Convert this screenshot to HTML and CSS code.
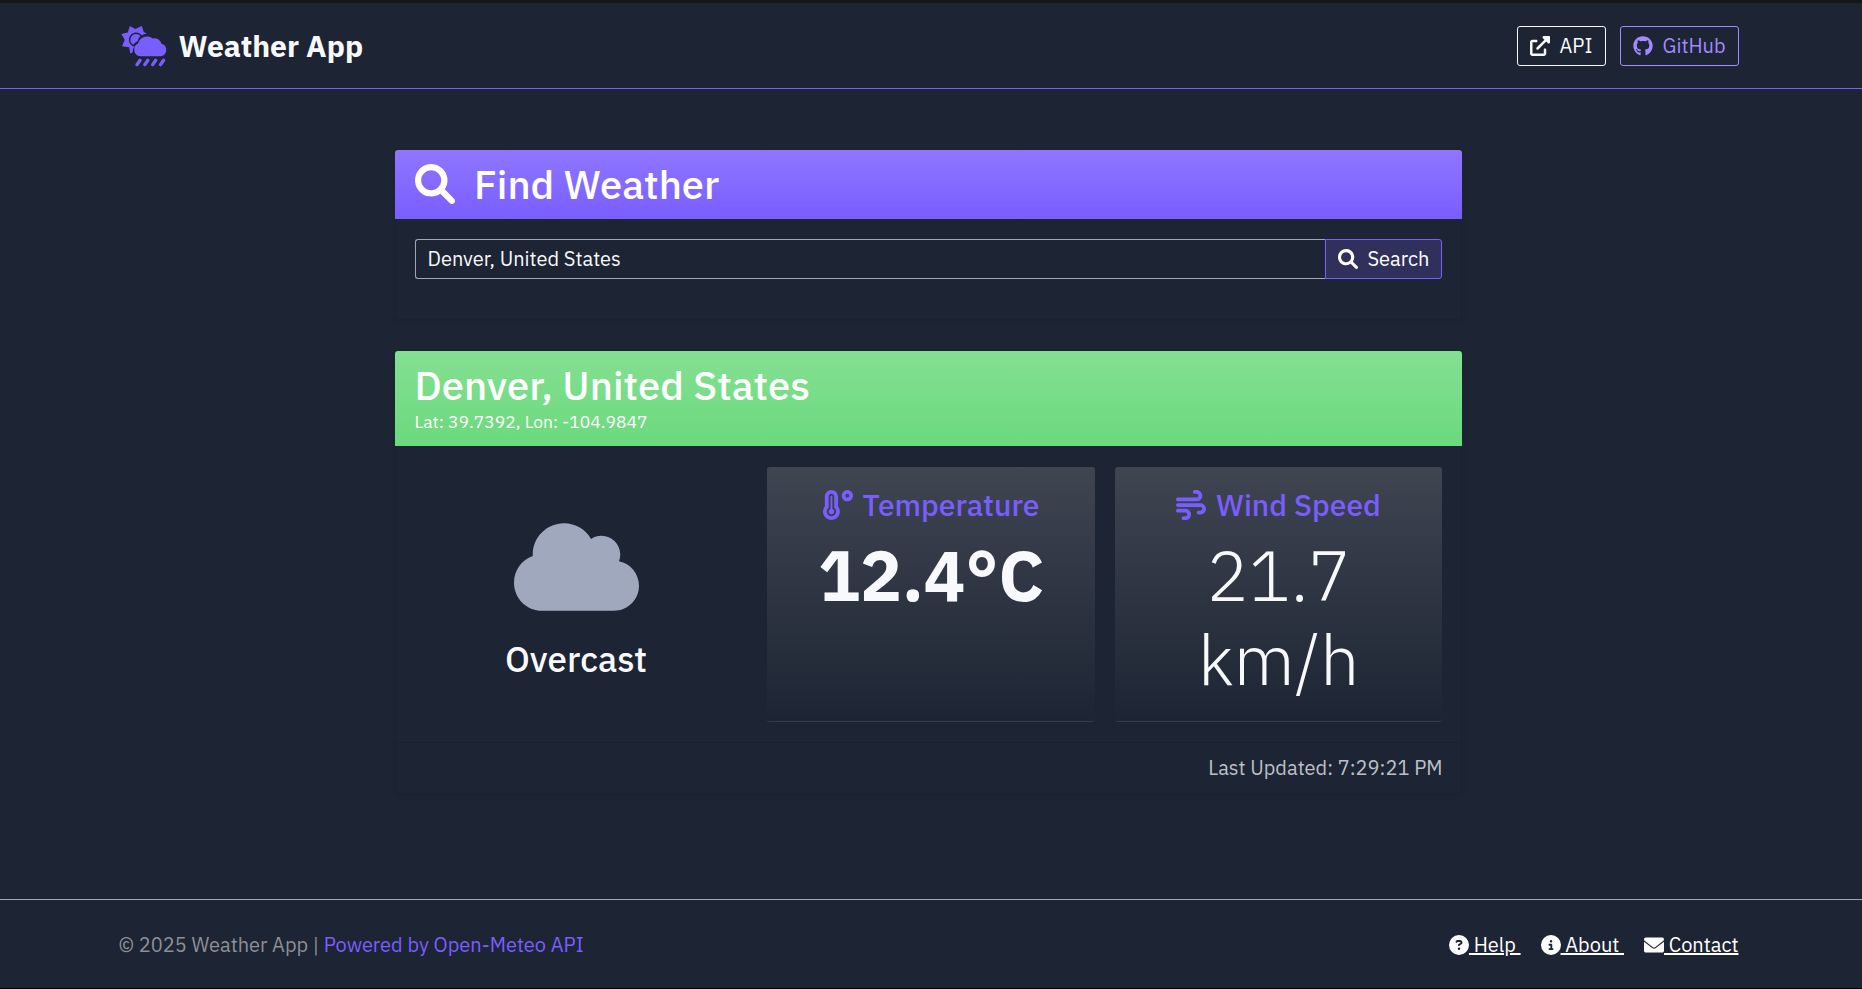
FILE: index.html
```html
<!DOCTYPE html>
<html lang="en">
<head>
<meta charset="utf-8">
<title>Weather App</title>
<link rel="stylesheet" href="styles.css">
</head>
<body>
<svg class="sprite" aria-hidden="true">
  <symbol id="search" viewBox="0 0 512 512"><path d="M500.3 443.7l-119.7-119.7c27.22-40.41 40.65-90.9 33.46-144.7C401.8 87.79 326.8 13.32 235.2 1.723C99.01-15.51-15.51 99.01 1.724 235.2c11.6 91.64 86.08 166.7 177.6 178.9c53.8 7.189 104.3-6.236 144.7-33.46l119.7 119.7c15.62 15.62 40.95 15.62 56.57 0C515.9 484.7 515.9 459.3 500.3 443.7zM79.1 208c0-70.58 57.42-128 128-128s128 57.42 128 128c0 70.58-57.42 128-128 128S79.1 278.6 79.1 208z"/></symbol>
</svg>
<header class="topbar">
  <div class="container bar">
    <a class="brand">
      <svg class="brand-icon" viewBox="0 0 138 122" preserveAspectRatio="none">
        <path d="M34 79L27 82L24 63L3 60L11 41L1 24L20 19L26 0L42 9L61 0L67 18L76 23Q66 24 61 28A21 21 0 1 0 39 61Q34 68 34 79Z"/>
        <path d="M36 56A17 17 0 1 1 57 30Q51 35 49 45Q42 49 36 56Z"/>
        <path d="M57 90A20 20 0 0 1 50 52A27 27 0 0 1 93 37A22 22 0 0 1 119 53A19 19 0 0 1 117 90Z"/>
        <path class="drops" d="M56 102L47 115M79 102L70 115M102 102L93 115M125 102L116 115"/>
      </svg>
      <span class="brand-name">Weather App</span>
    </a>
    <nav class="actions">
      <a class="btn btn-light"><svg class="icon" viewBox="0 0 512 512"><path d="M384 320c-17.67 0-32 14.33-32 32v96H64V160h96c17.67 0 32-14.32 32-32s-14.33-32-32-32L64 96c-35.35 0-64 28.65-64 64V448c0 35.34 28.65 64 64 64h288c35.35 0 64-28.66 64-64v-96C416 334.3 401.7 320 384 320zM488 0H352c-12.94 0-24.62 7.797-29.56 19.75c-4.969 11.97-2.219 25.72 6.938 34.88L370.8 96L169.4 297.4c-12.5 12.5-12.5 32.75 0 45.25C175.6 348.9 183.8 352 192 352s16.38-3.125 22.62-9.375L416 141.3l41.38 41.38c9.156 9.141 22.88 11.84 34.88 6.938C504.2 184.6 512 172.9 512 160V24C512 10.74 501.3 0 488 0z"/></svg><span>API</span></a>
      <a class="btn btn-violet"><svg class="icon" viewBox="0 0 496 512"><path d="M244.8 8C106.1 8 0 113.3 0 252c0 110.9 69.8 205.8 169.5 239.2 12.8 2.3 17.3-5.6 17.3-12.1 0-6.2-.3-40.4-.3-61.4 0 0-70 15-84.7-29.8 0 0-11.4-29.1-27.8-36.6 0 0-22.9-15.7 1.6-15.4 0 0 24.9 2 38.6 25.8 21.9 38.6 58.6 27.5 72.9 20.9 2.3-16 8.8-27.1 16-33.7-55.9-6.2-112.3-14.3-112.3-110.5 0-27.5 7.6-41.3 23.6-58.9-2.6-6.5-11.1-33.3 2.6-67.9 20.9-6.5 69 27 69 27 20-5.6 41.5-8.5 62.8-8.5s42.8 2.9 62.8 8.5c0 0 48.1-33.6 69-27 13.7 34.7 5.2 61.4 2.6 67.9 16 17.7 25.8 31.5 25.8 58.9 0 96.5-58.9 104.2-114.8 110.5 9.2 7.9 17 22.9 17 46.4 0 33.7-.3 75.4-.3 83.6 0 6.5 4.6 14.4 17.3 12.1C428.2 457.8 496 362.9 496 252 496 113.3 383.5 8 244.8 8z"/></svg><span>GitHub</span></a>
    </nav>
  </div>
</header>
<main class="main">
  <section class="card search-card">
    <h2 class="card-head head-violet"><svg class="icon-xl"><use href="#search"/></svg><span class="find-title">Find Weather</span></h2>
    <form class="search-form">
      <div class="field"><span>Denver, United States</span></div>
      <div class="search-btn"><svg class="icon"><use href="#search"/></svg><span>Search</span></div>
    </form>
  </section>
  <section class="card weather-card">
    <div class="card-head head-green">
      <h2 class="place">Denver, United States</h2>
      <div class="coords">Lat: 39.7392, Lon: -104.9847</div>
    </div>
    <div class="readings">
      <div class="condition">
        <svg class="cloud" viewBox="0 0 640 512"><path d="M537.6 226.6c4.1-10.7 6.4-22.4 6.4-34.6 0-53-43-96-96-96-19.7 0-38.1 6-53.3 16.2C367 64.2 315.3 32 256 32c-88.4 0-160 71.6-160 160 0 2.7.1 5.4.2 8.1C40.2 219.8 0 273.2 0 336c0 79.5 64.5 144 144 144h368c70.7 0 128-57.3 128-128 0-61.9-44-113.6-102.4-125.4z"/></svg>
        <div class="condition-name">Overcast</div>
      </div>
      <div class="tile">
        <h3 class="tile-title"><svg class="icon-lg" viewBox="0 0 512 512"><path d="M416 0c-52.9 0-96 43.1-96 96s43.1 96 96 96 96-43.1 96-96-43.1-96-96-96zm0 128c-17.7 0-32-14.3-32-32s14.3-32 32-32 32 14.3 32 32-14.3 32-32 32zm-160-16C256 50.1 205.9 0 144 0S32 50.1 32 112v166.5C12.3 303.2 0 334 0 368c0 79.5 64.5 144 144 144s144-64.5 144-144c0-34-12.3-64.9-32-89.5V112zM144 448c-44.1 0-80-35.9-80-80 0-25.5 12.2-48.9 32-63.8V112c0-26.5 21.5-48 48-48s48 21.5 48 48v192.2c19.8 14.8 32 38.3 32 63.8 0 44.1-35.9 80-80 80zm16-125.1V112c0-8.8-7.2-16-16-16s-16 7.2-16 16v210.9c-18.6 6.6-32 24.2-32 45.1 0 26.5 21.5 48 48 48s48-21.5 48-48c0-20.9-13.4-38.5-32-45.1z"/></svg><span>Temperature</span></h3>
        <div class="value value-bold">12.4°C</div>
      </div>
      <div class="tile">
        <h3 class="tile-title"><svg class="icon-lg" viewBox="0 0 512 512"><path d="M288 32c0 17.7 14.3 32 32 32h32c17.7 0 32 14.3 32 32s-14.3 32-32 32H32c-17.7 0-32 14.3-32 32s14.3 32 32 32H352c53 0 96-43 96-96s-43-96-96-96H320c-17.7 0-32 14.3-32 32zm64 352c0 17.7 14.3 32 32 32h32c53 0 96-43 96-96s-43-96-96-96H32c-17.7 0-32 14.3-32 32s14.3 32 32 32H416c17.7 0 32 14.3 32 32s-14.3 32-32 32H384c-17.7 0-32 14.3-32 32zM128 512h32c53 0 96-43 96-96s-43-96-96-96H32c-17.7 0-32 14.3-32 32s14.3 32 32 32H160c17.7 0 32 14.3 32 32s-14.3 32-32 32H128c-17.7 0-32 14.3-32 32s14.3 32 32 32z"/></svg><span>Wind Speed</span></h3>
        <div class="value value-light">21.7<br>km/h</div>
      </div>
    </div>
    <div class="updated"><span>Last Updated: 7:29:21 PM</span></div>
  </section>
</main>
<footer class="footer">
  <div class="container bar">
    <div class="credits"><span class="copy">© 2025 Weather App | </span><a class="powered">Powered by Open-Meteo API</a></div>
    <nav class="links">
      <a class="link"><svg class="icon" viewBox="0 0 512 512"><path fill-rule="evenodd" d="M256 512A256 256 0 1 0 256 0a256 256 0 1 0 0 512zM169.8 165.3c7.9-22.3 29.1-37.3 52.8-37.3h58.3c34.9 0 63.1 28.3 63.1 63.1c0 22.6-12.1 43.5-31.7 54.8L280 264.4c-.2 13-10.9 23.6-24 23.6c-13.3 0-24-10.7-24-24V250.5c0-8.6 4.6-16.5 12.1-20.8l44.3-25.4c4.7-2.7 7.6-7.7 7.6-13.1c0-8.4-6.8-15.1-15.1-15.1H222.6c-3.4 0-6.4 2.1-7.5 5.3l-.4 1.2c-4.4 12.5-18.2 19-30.6 14.6s-19-18.2-14.6-30.6l.4-1.2zM224 352a32 32 0 1 1 64 0 32 32 0 1 1-64 0z"/></svg><span>&nbsp;Help&nbsp;</span></a>
      <a class="link"><svg class="icon" viewBox="0 0 512 512"><path fill-rule="evenodd" d="M256 512A256 256 0 1 0 256 0a256 256 0 1 0 0 512zM216 336h24V272H216c-13.3 0-24-10.7-24-24s10.7-24 24-24h48c13.3 0 24 10.7 24 24v88h8c13.3 0 24 10.7 24 24s-10.7 24-24 24H216c-13.3 0-24-10.7-24-24s10.7-24 24-24zm40-208a32 32 0 1 1 0 64 32 32 0 1 1 0-64z"/></svg><span>&nbsp;About&nbsp;</span></a>
      <a class="link"><svg class="icon" viewBox="0 0 512 512"><path d="M256 352c-16.53 0-33.06-5.422-47.16-16.41L0 173.2V400C0 426.5 21.49 448 48 448h416c26.51 0 48-21.49 48-48V173.2l-208.8 162.5C289.1 346.6 272.5 352 256 352zM16.29 145.3l212.2 165.1c16.19 12.6 38.87 12.6 55.06 0l212.2-165.1C505.1 137.3 512 125 512 112C512 85.49 490.5 64 464 64h-416C21.49 64 0 85.49 0 112C0 125 6.01 137.3 16.29 145.3z"/></svg><span>&nbsp;Contact</span></a>
    </nav>
  </div>
</footer>
</body>
</html>
```
FILE: styles.css
```css
* { box-sizing: border-box; }
body {
  margin: 0;
  height: 989px;
  display: flex;
  flex-direction: column;
  overflow: hidden;
  background: #1d2433;
  border-top: 3px solid #161616;
  border-bottom: 1px solid #000;
  color: #f8f9fc;
  font-family: "IBM Plex Sans", "Noto Sans", sans-serif;
  font-size: 20px;
  line-height: 30px;
}
h2, h3 { margin: 0; font-weight: 500; }
svg { fill: currentColor; display: block; flex: none; }
.sprite { position: absolute; width: 0; height: 0; }
.icon { width: 20px; height: 20px; }
.icon-lg { width: 30px; height: 30px; }
.icon-xl { width: 40px; height: 40px; }
.container { width: 1620px; margin-left: 118.5px; }
.bar { display: flex; justify-content: space-between; align-items: center; }

.topbar { height: 86px; border-bottom: 1px solid #795eff; }
.topbar .bar { height: 86px; }
.brand { display: flex; align-items: center; padding-left: 2px; }
.brand-icon { width: 47px; height: 41px; color: #795eff; }
.drops { fill: none; stroke: currentColor; stroke-width: 10; stroke-linecap: round; }
.brand-name { margin-left: 11px; font-size: 30px; font-weight: 700; }
.actions { display: flex; gap: 14px; }
.btn { height: 40px; display: flex; align-items: center; border: 1px solid; border-radius: 3px; padding-left: 12px; }
.btn span { margin-left: 10px; }
.btn-light { width: 89px; }
.btn-violet { width: 119px; color: #a18aff; }

.main { flex: 1; padding: 61px 0 0 395px; }
.card { width: 1067px; border-radius: 3px; box-shadow: 0 0 0 1px rgba(0,0,0,.07) inset, 0 2px 5px rgba(0,0,0,.06); }
.card-head { border-radius: 3px 3px 0 0; color: #fff; padding: 0 19.5px; }
.head-violet { height: 69px; display: flex; align-items: center; padding-bottom: 2px; background: linear-gradient(#8f76ff, #795eff); }
.find-title { margin-left: 19.5px; font-size: 40px; }
.search-card { height: 170px; }
.search-form { display: flex; padding: 20px 20px 0; }
.field { width: 910px; height: 40px; line-height: 38px; border: 1px solid #a0a8b8; border-right: 0; border-radius: 3px 0 0 3px; padding-left: 11.5px; }
.search-btn { width: 117px; height: 40px; display: flex; align-items: center; border: 1px solid #795eff; border-radius: 0 3px 3px 0; background: #30305c; padding-left: 12px; color: #fff; }
.search-btn span { margin-left: 9.5px; }

.weather-card { margin-top: 31px; height: 443px; }
.head-green { height: 95px; padding-top: 10px; background: linear-gradient(#84e092, #6bd97d); }
.place { font-size: 40px; line-height: 48px; }
.coords { font-size: 17.5px; line-height: 26px; }
.readings { display: grid; grid-template-columns: 321px 328px 327px; column-gap: 20px; justify-content: end; padding: 21px 20px 0; height: 296px; }
.condition { display: flex; flex-direction: column; align-items: center; padding-top: 50px; margin-left: -21px; }
.cloud { width: 125px; height: 100px; color: #a0a8be; }
.condition-name { margin-top: 21px; line-height: 42px; font-size: 35px; font-weight: 500; }
.tile { height: 255px; border-radius: 3px; border-bottom: 1px solid #363c49; background: linear-gradient(#3f4551, #1d2433); text-align: center; padding-top: 20px; }
.tile-title { display: flex; justify-content: center; align-items: center; height: 36px; color: #795eff; font-size: 30px; }
.tile-title svg { margin-right: 10px; }
.value { margin-top: 10px; font-size: 70px; line-height: 84px; }
.value-bold { font-weight: 700; }
.value-light { font-weight: 300; }
.updated { height: 51px; line-height: 49px; padding-right: 19.5px; text-align: right; color: #bcc0c8; border-top: 1px solid rgba(0,0,0,.1); }

.footer { height: 89px; border-top: 1px solid #a0a8b8; }
.footer .bar { height: 89px; }
.copy { color: #8d9096; white-space: pre; }
.powered { color: #795eff; }
.links { display: flex; gap: 20px; color: #fff; }
.link { display: flex; align-items: center; }
.link span { text-decoration: underline; text-decoration-thickness: 2px; }
```
